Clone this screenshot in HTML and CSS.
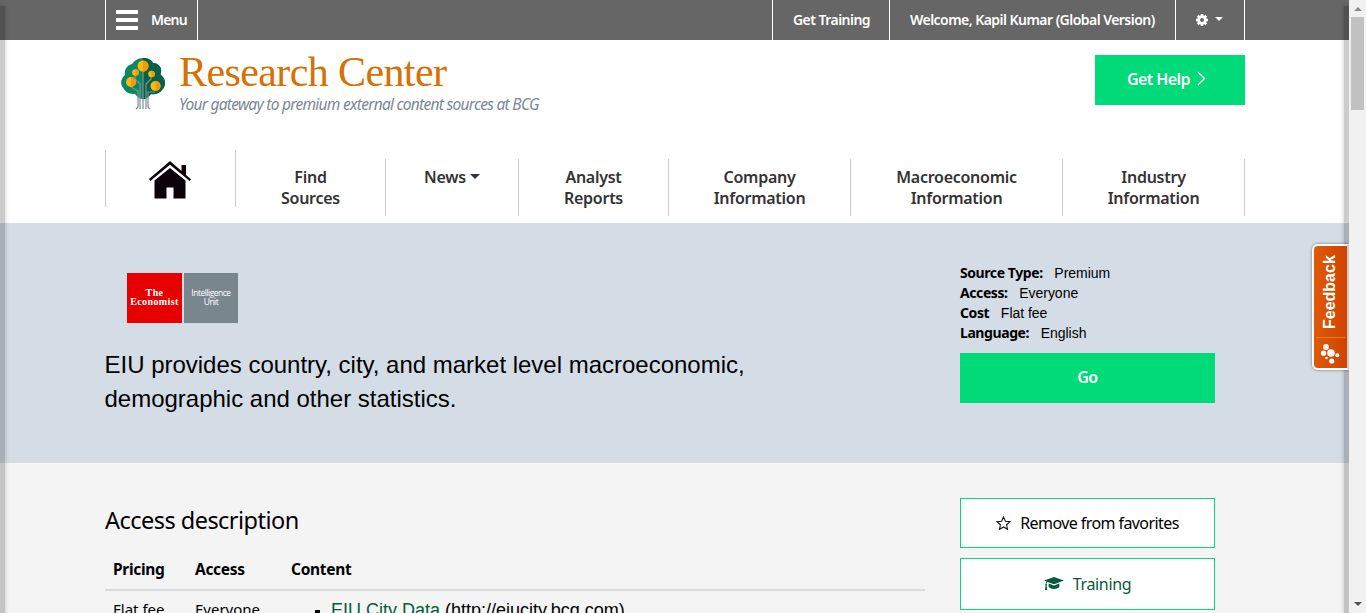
FILE: index.html
```html
<!DOCTYPE html>
<html lang="en">
<head>
<meta charset="utf-8">
<title>Research Center</title>
<link rel="stylesheet" href="styles.css">
</head>
<body>
<div class="window">
<div class="page">
  <header class="topbar">
    <div class="container topbar-row">
      <a class="menu"><span class="burger"><i></i><i></i><i></i></span><span class="menu-label">Menu</span></a>
      <nav class="user-nav">
        <a class="training-link">Get Training</a>
        <a class="welcome">Welcome, Kapil Kumar (Global Version)</a>
        <a class="settings">
          <svg width="12" height="12" viewBox="0 0 12 12"><g fill="#fff"><circle cx="6" cy="6" r="4.7"/><path d="M4.700 0h2.600v12H4.700zM0 4.700h12v2.600H0z"/><path d="M4.700 0h2.600v12H4.700zM0 4.700h12v2.600H0z" transform="rotate(45 6 6)"/></g><circle cx="6" cy="6" r="2" fill="#666"/></svg>
          <b class="caret light"></b>
        </a>
      </nav>
    </div>
  </header>

  <div class="container brand-row">
    <div class="brand">
      <svg class="tree" width="44" height="54" viewBox="0 0 44 54">
        <path fill="#0b8763" d="M22 1c5 0 9 2 10 5 5 0 9 4 8 9-1 2 0 3 1 4 4 4 4 10 0 14-3 4-8 5-11 4-2 3-5 5-8 5s-6-2-8-5c-5 0-9-1-11-5-4-4-4-10 1-14-1-5 2-10 7-11 2-3 6-6 11-6z"/>
        <path fill="#07614a" d="M22 1c5 0 9 2 10 5 5 0 9 4 8 9-1 2 0 3 1 4 4 4 4 10 0 14-3 4-8 5-11 4-2 3-5 5-8 5z"/>
        <g fill="none" stroke="#7f8f96" stroke-width="1.200"><path d="M22 14v38M19 52V27l-5-5v-6M25 52V27l5-5v-4M17 46V34l-7-4M27 46V35h7M15 52l2-2v-5M29 52l-2-2v-5"/></g>
        <g fill="#fbb916"><circle cx="22" cy="9" r="5.500"/><circle cx="14.500" cy="15.500" r="3.300"/><circle cx="30.500" cy="17" r="3.300"/><circle cx="10" cy="25" r="5"/><circle cx="34.500" cy="29" r="5"/></g>
        <g fill="#f59a05"><path d="M22 3.500a5.500 5.500 0 0 1 0 11zM14.500 12.200a3.300 3.300 0 0 1 0 6.600zM30.500 13.700a3.300 3.300 0 0 1 0 6.600zM10 20a5 5 0 0 1 0 10zM34.500 24a5 5 0 0 1 0 10z"/></g>
      </svg>
      <div class="brand-text"><div class="brand-name">Research Center</div><div class="tagline">Your gateway to premium external content sources at BCG</div></div>
    </div>
    <a class="help"><span>Get Help</span><svg width="9" height="15" viewBox="0 0 9 15"><path d="M1 1l6.500 6.500L1 14" fill="none" stroke="#fff" stroke-width="1.300"/></svg></a>
  </div>

  <nav class="container main-nav">
    <a class="home"><svg width="42" height="38" viewBox="0 0 42 38"><path fill="#0b0309" d="M0 18L21 0l11.500 10V4H37v10l5 4.300-1.300 1.700L21 3.800 1.300 20zM5.500 19.500L21 7l15.500 12.500V37.500H24.500V26.500H17.500V37.500H5.500z"/></svg></a>
    <a><span>Find<br>Sources</span></a>
    <a><span>News<b class="caret"></b></span></a>
    <a><span>Analyst<br>Reports</span></a>
    <a><span>Company<br>Information</span></a>
    <a><span>Macroeconomic<br>Information</span></a>
    <a><span>Industry<br>Information</span></a>
  </nav>

  <section class="hero">
    <div class="container hero-row">
      <div class="hero-main">
        <div class="logo"><div class="logo-red"><span>The</span><span>Economist</span></div><div class="logo-grey"><span>Intelligence</span><span>Unit</span></div></div>
        <p class="summary">EIU provides country, city, and market level macroeconomic,<br>demographic and other statistics.</p>
      </div>
      <aside class="facts">
        <div><b>Source Type:</b><span>Premium</span></div>
        <div><b>Access:</b><span>Everyone</span></div>
        <div><b>Cost</b><span>Flat fee</span></div>
        <div><b>Language:</b><span>English</span></div>
        <a class="go">Go</a>
      </aside>
    </div>
  </section>

  <main class="container content">
    <section class="access">
      <h2>Access description</h2>
      <div class="row head"><span>Pricing</span><span>Access</span><span>Content</span></div>
      <div class="row cells"><span>Flat fee</span><span>Everyone</span><span class="item"><i></i><span class="item-text"><a>EIU City Data</a> (http://eiucity.bcg.com)</span></span></div>
    </section>
    <aside class="actions">
      <a class="favorite"><svg width="15" height="14" viewBox="0 0 15 14"><path d="M7.500 1l1.900 4.200 4.600.5-3.400 3.100.9 4.500-4-2.300-4 2.300.9-4.500L1 5.700l4.600-.5z" fill="none" stroke="#111" stroke-width="1.100"/></svg><span>Remove from favorites</span></a>
      <a class="training"><svg width="20" height="14" viewBox="0 0 20 14"><path fill="#075b3a" d="M10 0l10 3.500L10 7.300 3.500 5c-.8.300-1 1-1 2l.6.700-.5 1 .8 4.300H1l.6-4.300-.5-1 .6-.8c0-1 .2-1.800.8-2.300L0 3.500zM4.600 6.600L10 8.600l5.400-2v3C15 11 12.500 12 10 12S5 11 4.600 9.600z"/></svg><span>Training</span></a>
    </aside>
  </main>
  <div class="edge left"></div>
  <div class="edge right"></div>
  <div class="feedback"><span class="feedback-label">Feedback</span><svg width="20" height="21" viewBox="0 0 20 21"><g fill="#fff"><circle cx="6" cy="4" r="2.900"/><circle cx="3.500" cy="10.200" r="2.600"/><circle cx="11" cy="10" r="3.800"/><circle cx="17.300" cy="12.300" r="2"/><circle cx="11.700" cy="18" r="2.600"/><circle cx="6.500" cy="15" r="1.300"/></g></svg></div>
</div>
<div class="scrollbar"><i class="up"></i><i class="thumb"></i><i class="down"></i></div>
</div>
</body>
</html>
```

FILE: styles.css
```css
* { box-sizing: border-box; }
body { margin: 0; font-family: "Noto Sans", sans-serif; font-size: 16px; color: #000; }
.window { display: flex; width: 1366px; height: 613px; overflow: hidden; }
.page { position: relative; width: 1349px; height: 613px; overflow: hidden; background: linear-gradient(#fff 463px, #f4f4f4 463px); }
.container { width: 1140px; margin: 0 auto 0 105px; }

.topbar { height: 40px; background: #666; color: #fff; font-size: 14px; font-weight: 600; white-space: nowrap; }
.topbar-row { display: flex; justify-content: space-between; height: 40px; line-height: 40px; }
.menu { display: flex; width: 93px; border: solid #fff; border-width: 0 1px; padding-left: 10px; letter-spacing: -.8px; }
.burger { display: flex; flex-direction: column; gap: 4px; padding-top: 10px; margin-right: 13px; }
.burger i { width: 22px; height: 4px; background: #fff; }
.user-nav { display: flex; border-right: 1px solid #fff; }
.user-nav a { border-left: 1px solid #fff; padding-left: 20px; letter-spacing: -.54px; }
.training-link { width: 117px; }
.welcome { width: 286px; }
.settings { display: flex; align-items: center; width: 69px; }
.caret { display: inline-block; border: solid transparent; border-width: 5px 5px 0; border-top-color: #333; margin-left: 4px; vertical-align: 4px; }
.caret.light { border-width: 4px 4px 0; border-top-color: #fff; margin: -2px 0 0 7px; }

.brand-row { display: flex; justify-content: space-between; height: 110px; padding-top: 15px; }
.brand { display: flex; padding: 2px 0 0 16px; }
.brand-text { margin-left: 14px; white-space: nowrap; }
.brand-name { font: 42px/40px "Liberation Serif", serif; color: #d67105; letter-spacing: -.6px; margin-top: -5px; height: 40px; }
.tagline { font-size: 15.500px; line-height: 20px; font-style: italic; color: #7b8795; letter-spacing: -.72px; margin-top: 2px; }
.help { display: flex; gap: 7px; width: 150px; height: 50px; padding-left: 32px; background: #00da79; color: #fff; font-weight: 600; line-height: 49px; letter-spacing: -.6px; }
.help svg { margin-top: 16px; }

.main-nav { display: grid; grid-template-columns: 131px 150px 133px 150px 182px 212px 182px; height: 73px; }
.main-nav a { height: 57px; margin-top: 9px; padding-top: 8px; border-right: 1px solid #ccc; text-align: center; font-weight: 600; line-height: 21px; letter-spacing: -.27px; color: #333; }
.main-nav .home { border-left: 1px solid #ccc; margin-top: 0; padding: 11px 2px 0 0; }
.home svg { display: block; margin: 0 auto; }

.hero { height: 240px; background: #d4dce6; }
.hero-row { display: flex; }
.hero-main { width: 855px; padding-top: 50px; }
.logo { display: flex; gap: 2px; margin-left: 22px; width: 111px; height: 50px; color: #fff; text-align: center; }
.logo-red, .logo-grey { display: flex; flex-direction: column; align-items: center; line-height: 9px; white-space: nowrap; }
.logo-red { width: 55px; padding-top: 16px; background: #e60000; font-family: "Liberation Serif", serif; font-size: 10px; font-weight: bold; line-height: 8.500px; letter-spacing: .4px; }
.logo-grey { width: 54px; padding-top: 15px; background: #79868e; font-family: "Open Sans", sans-serif; font-size: 8.500px; letter-spacing: -.5px; }
.summary { margin: 25px 0 0 -.5px; font: 24px/34px "Liberation Sans", Arial, sans-serif; letter-spacing: -.01px; white-space: nowrap; }
.facts { width: 255px; padding-top: 40px; font: 14px/20px "Liberation Sans", Arial, sans-serif; }
.facts b { font: 700 14px/20px "Noto Sans", sans-serif; letter-spacing: -.42px; margin-right: 11.700px; }
.facts div { height: 20px; white-space: nowrap; letter-spacing: -.03px; }
.go { display: block; height: 50px; margin-top: 10px; background: #00da79; color: #fff; text-align: center; font: 600 16px/48px "Noto Sans", sans-serif; letter-spacing: -.4px; }

.content { display: flex; height: 150px; }
.access { width: 820px; margin-right: 35px; white-space: nowrap; }
h2 { margin: 40px 0 0; font-size: 23.500px; line-height: 34px; font-weight: 400; letter-spacing: -.53px; }
.row { display: grid; grid-template-columns: 82px 96px 1fr; padding-left: 8px; }
.head { height: 43px; margin-top: 11px; padding: 9px 0 8px 8px; line-height: 24px; border-bottom: 2px solid #d9dadb; font-size: 15.500px; font-weight: 700; letter-spacing: -.3px; }
.cells { padding-top: 7px; font-size: 15px; line-height: 22px; }
.item { display: flex; padding-left: 24px; font: 18px/24px "Liberation Sans", Arial, sans-serif; }
.item i { width: 5px; height: 5px; background: #000; margin: 12px 11px 0 0; }
.item a { color: #075b3a; }
.actions { width: 255px; padding-top: 35px; }
.actions a { display: flex; justify-content: center; align-items: center; gap: 9px; height: 50px; border: 1px solid #00da79; background: #fff; margin-bottom: 10px; white-space: nowrap; letter-spacing: -.58px; }
.actions .training { height: 52px; color: #075b3a; letter-spacing: -.35px; }

.edge { position: absolute; top: 6px; bottom: -10px; width: 10px; background: rgba(0,0,0,.2); box-shadow: 0 0 4px rgba(0,0,0,.22); }
.edge.left { left: -5px; }
.edge.right { right: -5px; }
.feedback { position: absolute; left: 1312px; top: 244px; width: 37px; height: 126px; display: flex; flex-direction: column; align-items: center; border: 2px solid #fff; border-right-color: #ccc; border-radius: 6px 0 0 6px; background: linear-gradient(90deg, #e05a06, #cf4300); box-shadow: 0 0 3px rgba(0,0,0,.5); }
.feedback-label { writing-mode: vertical-rl; transform: rotate(180deg); width: 29px; height: 92px; padding-bottom: 1px; font: bold 16px/27px "Liberation Sans", Arial, sans-serif; color: #fff; text-align: center; border-top: 1px solid #ee7b19; }
.feedback svg { margin: 5px 1px 0 0; }

.scrollbar { display: flex; flex-direction: column; align-items: center; width: 17px; height: 613px; background: #f1f1f1; }
.up { border: solid transparent; border-width: 0 4px 4px; border-bottom-color: #888; margin-top: 7px; }
.thumb { width: 13px; height: 93px; margin-top: 6px; background: #c1c1c1; }
.down { border: solid transparent; border-width: 4px 4px 0; border-top-color: #505050; margin: auto 0 7px; }
```
